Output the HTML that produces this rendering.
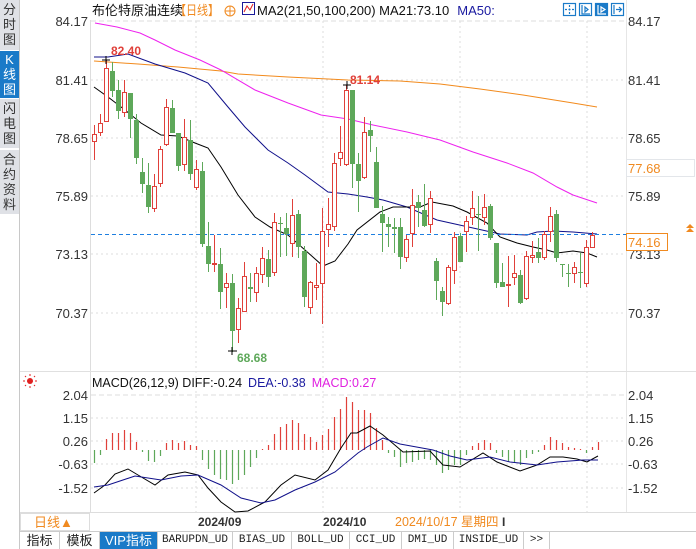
<!DOCTYPE html>
<html><head><meta charset="utf-8"><style>
body{margin:0;width:696px;height:549px;overflow:hidden;background:#fff;font-family:"Liberation Sans","Noto Sans CJK SC",sans-serif;position:relative}
.abs{position:absolute}
.sb{position:absolute;left:0;width:19px;background:#dfe1e6;color:#333;font-size:13px;line-height:15px;text-align:center;writing-mode:horizontal-tb}
.tab{position:absolute;top:532px;height:17px;font-size:12px;line-height:17px;text-align:center;border-right:1px solid #ccc;color:#222;font-family:"Liberation Mono","Noto Sans CJK SC",monospace}
</style></head><body>
<div class="sb" style="top:0;height:48px;padding-top:2px">分<br>时<br>图</div>
<div class="sb" style="top:51px;height:46px;background:#1a7ac8;color:#fff;padding-top:1px">K<br>线<br>图</div>
<div class="sb" style="top:99px;height:47px;padding-top:2px">闪<br>电<br>图</div>
<div class="sb" style="top:150px;height:62px;padding-top:2px">合<br>约<br>资<br>料</div>
<div class="abs" style="left:19px;top:0;width:1px;height:549px;background:#c8c8c8"></div>

<svg class="abs" style="left:0;top:0" width="696" height="549" xmlns="http://www.w3.org/2000/svg" font-family="Liberation Sans, Noto Sans CJK SC, sans-serif">
<line x1="90.5" y1="20" x2="90.5" y2="512" stroke="#ddd"/>
<line x1="626.5" y1="0" x2="626.5" y2="512" stroke="#e6e6e6"/>
<line x1="20" y1="371.5" x2="696" y2="371.5" stroke="#e0e0e0"/>
<line x1="20" y1="512.5" x2="696" y2="512.5" stroke="#ddd"/>
<line x1="20" y1="531.5" x2="696" y2="531.5" stroke="#ccc"/>
<g stroke="#ddd" stroke-dasharray="2,3">
<line x1="91" y1="21" x2="626" y2="21" stroke-dasharray="5,3"/>
<line x1="91" y1="80" x2="626" y2="80"/><line x1="91" y1="138" x2="626" y2="138"/>
<line x1="91" y1="196" x2="626" y2="196"/><line x1="91" y1="254" x2="626" y2="254"/>
<line x1="91" y1="313" x2="626" y2="313"/>
<line x1="91" y1="395" x2="626" y2="395" stroke-dasharray="5,3"/>
<line x1="91" y1="418" x2="626" y2="418"/><line x1="91" y1="441" x2="626" y2="441"/>
<line x1="91" y1="464" x2="626" y2="464"/><line x1="91" y1="488" x2="626" y2="488"/>
<line x1="196" y1="21" x2="196" y2="512"/><line x1="323" y1="21" x2="323" y2="512"/>
<line x1="460" y1="21" x2="460" y2="512"/><line x1="587" y1="21" x2="587" y2="512"/>
</g>
<g font-size="13" fill="#333" text-anchor="end">
<text x="88" y="26">84.17</text><text x="88" y="85">81.41</text><text x="88" y="143">78.65</text>
<text x="88" y="201">75.89</text><text x="88" y="259">73.13</text><text x="88" y="318">70.37</text>
<text x="88" y="400">2.04</text><text x="88" y="423">1.15</text><text x="88" y="446">0.26</text>
<text x="88" y="469">-0.63</text><text x="88" y="493">-1.52</text>
</g>
<g font-size="13" fill="#333">
<text x="628" y="26">84.17</text><text x="628" y="85">81.41</text><text x="628" y="143">78.65</text>
<text x="628" y="201">75.89</text><text x="628" y="259">73.13</text><text x="628" y="318">70.37</text>
<text x="628" y="400">2.04</text><text x="628" y="423">1.15</text><text x="628" y="446">0.26</text>
<text x="628" y="469">-0.63</text><text x="628" y="493">-1.52</text>
</g>
<rect x="626.5" y="159.5" width="68" height="17" fill="#fff" stroke="#e3e6ea"/>
<text x="628" y="173" font-size="13" fill="#f08a20">77.68</text>
<g fill="none" stroke-width="1">
<polyline stroke="#f28a1c" points="94,61 138,64 178,67 221,71 238,74 288,77 348,80 400,81 440,84 480,89 523,95 573,103 597,107"/>
<polyline stroke="#ee22ee" points="95,23 117,27 140,33 155,40 175,50 200,60 221,70 255,90 288,103 321,115 348,119 373,125 407,132 440,140 473,152 507,163 533,173 557,187 573,195 597,203"/>
<polyline stroke="#10108a" points="94,57 108,57 128,54 155,64 185,73 208,83 228,107 245,127 268,150 288,163 305,175 328,192 348,194 367,197 383,200 407,207 437,220 473,228 500,234 527,235 537,232 553,231 573,232 597,234"/>
<polyline stroke="#000" points="94,87 108,97 125,110 141,123 161,135 178,136 195,143 208,148 221,167 238,195 255,217 270,227 288,235 305,250 323,266 335,261 348,244 357,230 380,212 393,207 420,207 432,202 453,206 467,212 487,223 500,237 517,243 533,247 547,250 557,253 573,251 587,253 597,257"/>
</g>
<line x1="91" y1="234.5" x2="626" y2="234.5" stroke="#1e7fe0" stroke-dasharray="4,3"/>
<g id="c" stroke-width="1"></g>
<text x="111" y="55" font-size="12" font-weight="bold" fill="#e0403a">82.40</text>
<path d="M102,60H110M106,56V64" stroke="#000"/>
<text x="350" y="84" font-size="12" font-weight="bold" fill="#e0403a">81.14</text>
<path d="M343,85H351M347,81V89" stroke="#000"/>
<text x="237" y="362" font-size="12" font-weight="bold" fill="#5ea85a">68.68</text>
<path d="M228,351H237M232,347V355" stroke="#000"/>
<rect x="626.5" y="233.5" width="41" height="17" fill="#fff" stroke="#f08a20"/>
<text x="628" y="247" font-size="13" fill="#f08a20">74.16</text>
<path d="M686,232l4,-4l4,4zM686,228l4,-4l4,4z" fill="#f08a20"/>
<g id="h" stroke-width="1.2"></g>
<polyline fill="none" stroke="#000" points="94,493 105,485 115,474 128,469 138,475 155,485 168,475 185,472 198,475 208,488 221,502 235,512 248,511 265,502 281,485 295,475 315,480 328,470 341,448 351,433 357,433 370,426 383,435 403,452 430,451 443,465 460,467 483,453 497,462 520,471 537,465 550,457 563,457 577,459 587,462 598,456"/>
<polyline fill="none" stroke="#10108a" points="94,487 108,485 135,476 161,480 181,476 198,475 221,485 241,498 261,503 275,500 295,490 315,482 335,472 358,453 367,447 383,438 400,444 433,450 450,456 467,460 490,457 510,462 537,465 557,462 583,460 598,460"/>
<g transform="translate(30,381)"><circle r="3" fill="#e02020"/><g stroke="#e02020" stroke-width="1"><path d="M0,-7V-5M0,5V7M-7,0H-5M5,0H7M-5,-5L-4,-4M4,4L5,5M-5,5L-4,4M4,-4L5,-5"/></g></g>
<text x="92" y="387" font-size="12.5"><tspan fill="#111">MACD(26,12,9) DIFF:-0.24</tspan><tspan fill="#1a1aa0" dx="6">DEA:-0.38</tspan><tspan fill="#e020e0" dx="6">MACD:0.27</tspan></text>
<text x="92" y="15" font-size="13" fill="#111">布伦特原油连续</text>
<text x="175" y="15" font-size="13" fill="#f08a20" textLength="44" lengthAdjust="spacingAndGlyphs">【日线】</text>
<g transform="translate(230,11)" stroke="#f08a20" fill="none"><circle r="5"/><path d="M-5,0H5M0,-5V5"/></g>
<rect x="242.5" y="2.5" width="12" height="12" fill="#fff" stroke="#1a1a9a"/>
<polyline points="244,12 247,6 250,10 253,4" fill="none" stroke="#e02020"/>
<text x="257" y="15" font-size="13"><tspan fill="#111">MA2(21,50,100,200) MA21:73.10</tspan><tspan fill="#1a1aa0" dx="8">MA50:</tspan></text>
<g fill="none" stroke="#1a7ac8" stroke-width="1.2">
<rect x="563.5" y="3.5" width="12" height="12"/><path d="M569.5,5V14M565,9.5H574" stroke-dasharray="2,1.5"/>
<rect x="579.5" y="3.5" width="12" height="12"/><path d="M582,5V14H590M585,7V12l3,-2.5z"/>
<rect x="595.5" y="3.5" width="12" height="12" fill="#1a7ac8"/><path d="M598,5V14H606M601,7V12l4,-2.5z" stroke="#fff"/>
<rect x="611.5" y="3.5" width="12" height="12"/><path d="M614,5V14M616,9.5H621M619,7l2.5,2.5L619,12"/>
</g>
<rect x="20.5" y="513.5" width="69" height="17" fill="none" stroke="#ddd"/>
<text x="34" y="527" font-size="13" fill="#f08a20">日线▲</text>
<text x="198" y="526" font-size="12" font-weight="bold" fill="#333">2024/09</text>
<text x="323" y="526" font-size="12" font-weight="bold" fill="#333">2024/10</text>
<text x="395" y="526" font-size="12.5" fill="#f08a20">2024/10/17 星期四</text>
<text x="502" y="526" font-size="12" font-weight="bold" fill="#333">I</text>
</svg>

<div class="tab" style="left:20px;width:39px;font-family:'Liberation Sans','Noto Sans CJK SC',sans-serif;font-size:13px">指标</div>
<div class="tab" style="left:60px;width:39px;font-family:'Liberation Sans','Noto Sans CJK SC',sans-serif;font-size:13px">模板</div>
<div class="tab" style="left:100px;width:57px;background:#1a7ac8;color:#fff;font-family:'Liberation Sans','Noto Sans CJK SC',sans-serif;font-size:13px">VIP指标</div>
<div class="tab" style="left:158px;width:74px;font-size:11px">BARUPDN_UD</div>
<div class="tab" style="left:233px;width:58px;font-size:11px">BIAS_UD</div>
<div class="tab" style="left:292px;width:57px;font-size:11px">BOLL_UD</div>
<div class="tab" style="left:350px;width:51px;font-size:11px">CCI_UD</div>
<div class="tab" style="left:402px;width:51px;font-size:11px">DMI_UD</div>
<div class="tab" style="left:454px;width:69px;font-size:11px">INSIDE_UD</div>
<div class="tab" style="left:524px;width:25px;font-size:11px">&gt;&gt;</div>

<script>
var C=[[94,134,141,125,160,'r'],[100,123,132,114,136,'r'],[106,68,121,60,122,'r'],[112,71,91,62,97,'g'],[118,90,111,80,119,'g'],[124,92,112,80,117,'r'],[130,93,119,93,138,'g'],[136,120,158,114,164,'g'],[142,172,184,158,193,'g'],[148,185,207,163,213,'g'],[154,186,208,174,212,'r'],[160,149,183,146,187,'r'],[166,107,144,99,146,'r'],[172,108,133,100,133,'g'],[178,133,166,133,171,'g'],[184,137,164,119,171,'r'],[190,140,174,120,180,'g'],[196,169,187,160,190,'r'],[202,171,244,162,247,'g'],[208,246,264,222,272,'g'],[214,263,264,235,272,'r'],[220,264,292,248,309,'g'],[226,283,287,273,308,'r'],[232,283,331,274,352,'g'],[238,308,329,298,343,'r'],[244,276,311,262,311,'r'],[250,287,289,273,302,'g'],[256,273,292,267,302,'r'],[262,258,274,247,283,'r'],[268,259,277,250,287,'g'],[274,222,272,213,276,'r'],[280,223,224,217,257,'g'],[286,228,234,213,256,'g'],[292,215,243,199,257,'r'],[298,214,247,210,258,'g'],[304,251,297,246,307,'g'],[310,282,307,281,314,'r'],[316,285,287,263,300,'r'],[322,231,283,208,324,'r'],[328,224,229,198,247,'r'],[334,163,226,153,231,'r'],[340,152,158,126,166,'r'],[346,90,164,85,166,'r'],[352,90,164,90,188,'g'],[358,164,181,153,212,'g'],[364,132,177,117,179,'r'],[370,130,136,121,152,'g'],[376,162,208,147,208,'g'],[382,214,223,206,252,'g'],[388,224,227,217,247,'g'],[394,227,229,218,253,'g'],[400,227,257,218,269,'g'],[406,239,257,235,262,'r'],[412,205,233,189,247,'r'],[418,202,208,195,227,'g'],[424,210,226,184,227,'g'],[430,198,224,191,233,'r'],[436,261,281,258,300,'g'],[442,291,302,287,316,'g'],[448,267,303,265,305,'r'],[454,237,270,232,284,'r'],[460,236,262,233,262,'g'],[466,221,231,216,252,'r'],[472,208,217,191,225,'r'],[478,214,215,196,251,'g'],[484,207,217,194,225,'r'],[490,206,238,204,240,'g'],[496,243,283,243,288,'g'],[502,282,287,263,287,'g'],[508,284,285,256,307,'r'],[514,273,277,255,285,'r'],[520,275,303,270,304,'g'],[526,256,298,251,300,'r'],[532,255,257,241,263,'r'],[538,252,258,238,263,'g'],[544,234,257,231,260,'r'],[550,216,231,207,242,'r'],[556,214,258,210,262,'g'],[562,264,265,264,277,'g'],[568,273,274,264,287,'g'],[574,267,273,262,283,'r'],[580,272,273,253,288,'g'],[586,247,283,240,287,'r'],[592,235,247,232,248,'r']];
var s='',R='#e0403a',G='#5ea85a';
C.forEach(function(k){var c=k[0];
if(k[5]=='r'){s+='<line x1="'+(c+.5)+'" y1="'+k[3]+'" x2="'+(c+.5)+'" y2="'+k[1]+'" stroke="'+R+'"/><line x1="'+(c+.5)+'" y1="'+k[2]+'" x2="'+(c+.5)+'" y2="'+k[4]+'" stroke="'+R+'"/>';
var h=Math.max(k[2]-k[1],1);s+='<rect x="'+(c-1.5)+'" y="'+(k[1]+.5)+'" width="4" height="'+h+'" fill="#fff" stroke="'+R+'"/>';}
else{s+='<line x1="'+(c+.5)+'" y1="'+k[3]+'" x2="'+(c+.5)+'" y2="'+k[4]+'" stroke="'+G+'"/>';s+='<rect x="'+(c-2)+'" y="'+k[1]+'" width="5" height="'+Math.max(k[2]-k[1],1)+'" fill="'+G+'"/>';}});
document.getElementById('c').innerHTML=s;
var H=[[94,463],[100,455],[106,439],[112,433],[118,433],[124,430],[130,433],[136,442],[142,452],[148,461],[154,462],[160,456],[166,443],[172,440],[178,443],[184,441],[190,445],[196,446],[202,460],[208,469],[214,475],[220,479],[226,480],[232,484],[238,480],[244,475],[250,467],[256,458],[262,449],[268,445],[274,434],[280,427],[286,424],[292,420],[298,423],[304,434],[310,437],[316,442],[322,435],[328,429],[334,417],[340,409],[346,397],[352,402],[358,410],[364,410],[370,413],[376,428],[382,440],[388,453],[394,457],[400,467],[406,463],[412,462],[418,460],[424,459],[430,460],[436,465],[442,473],[448,470],[454,465],[460,465],[466,455],[472,446],[478,443],[484,440],[490,443],[496,453],[502,457],[508,462],[514,462],[520,465],[526,458],[532,454],[538,452],[544,445],[550,437],[556,440],[562,443],[568,447],[574,448],[580,449],[586,453],[592,447],[598,442]];
var t='';H.forEach(function(k){var y0=450,col=k[1]<y0?R:G;t+='<line x1="'+(k[0]+.5)+'" y1="'+y0+'" x2="'+(k[0]+.5)+'" y2="'+k[1]+'" stroke="'+col+'"/>';});
document.getElementById('h').innerHTML=t;
</script>
</body></html>
